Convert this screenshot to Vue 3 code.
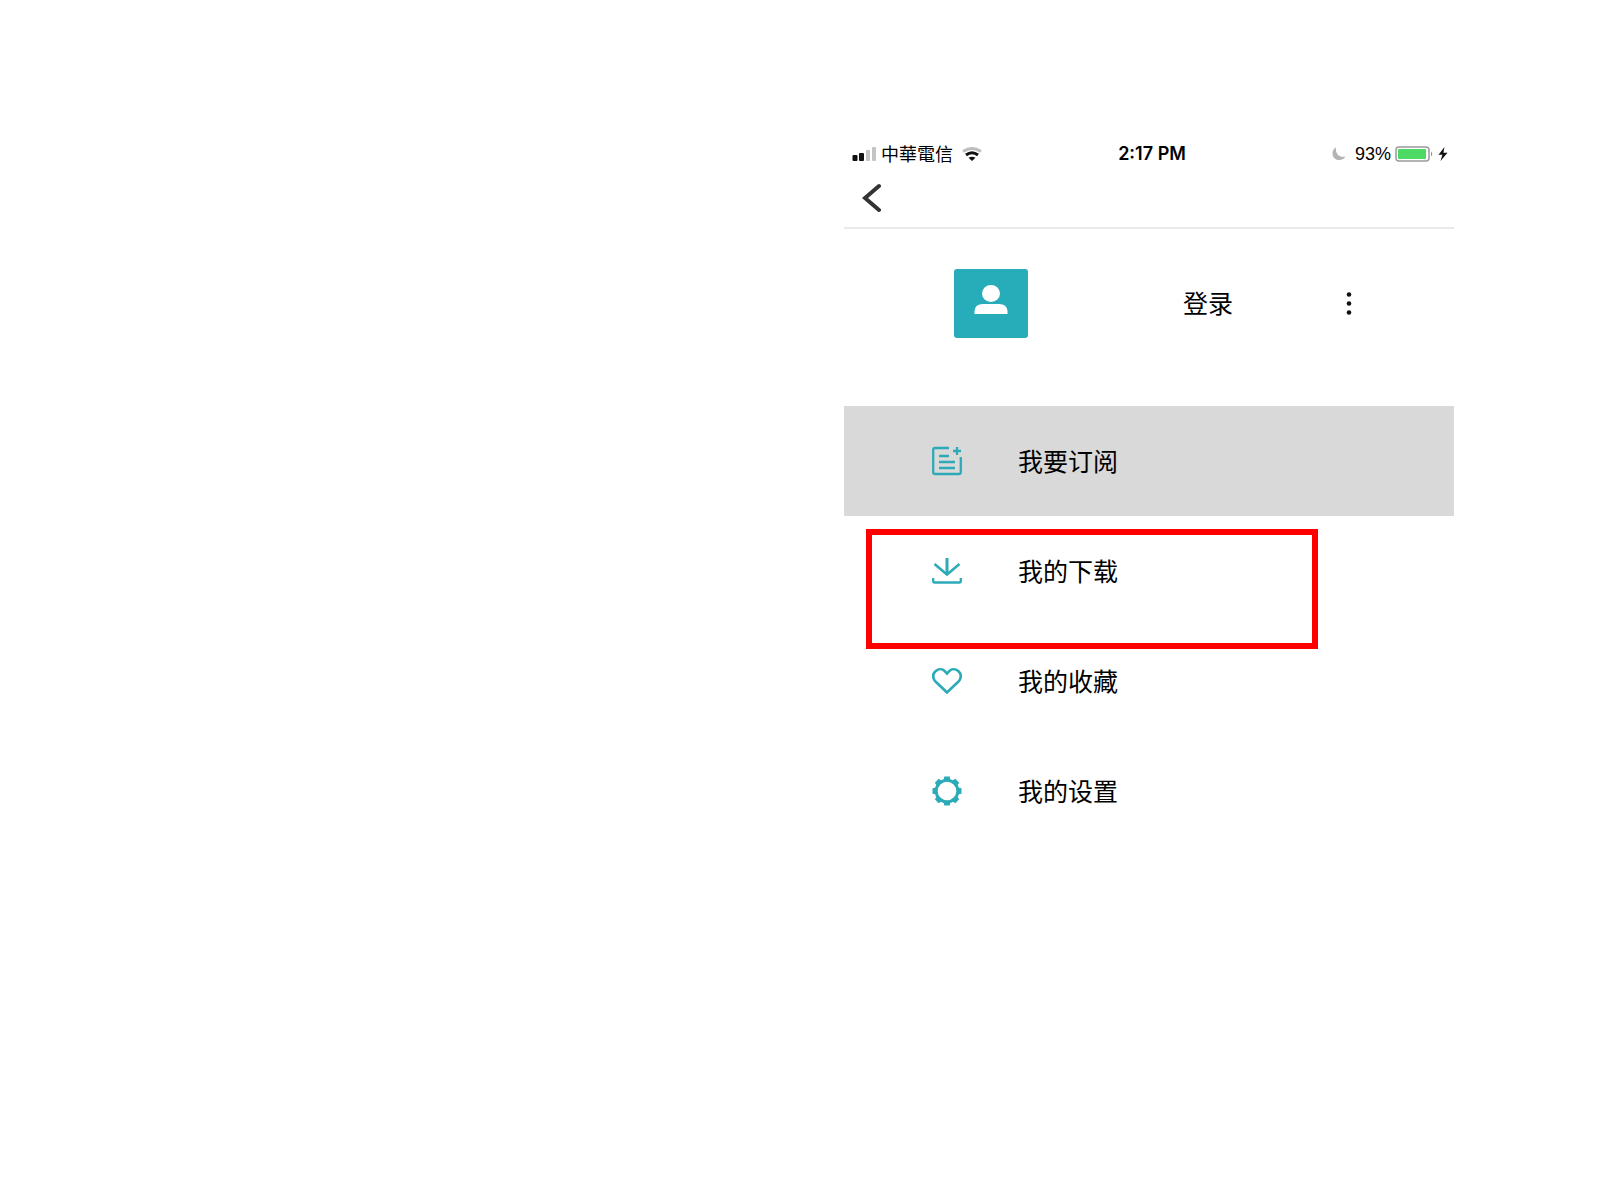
<script setup>
const items = [
  { id: 'subscribe', label: '我要订阅', active: true },
  { id: 'download', label: '我的下载', marked: true },
  { id: 'favorite', label: '我的收藏' },
  { id: 'settings', label: '我的设置' },
]
const teeth = [0, 45, 90, 135, 180, 225, 270, 315]
</script>

<template>
  <div class="page">
    <main class="phone">
      <div class="status">
        <div class="status-left">
          <svg width="25" height="14" viewBox="0 0 25 14" aria-hidden="true">
            <rect x="0.500" y="8" width="5" height="6" rx="1" fill="#111" />
            <rect x="7" y="6" width="5" height="8" rx="1" fill="#111" />
            <rect x="14" y="3" width="4" height="11" rx="1" fill="#c4c4c4" />
            <rect x="20" y="0" width="4" height="14" rx="1" fill="#c4c4c4" />
          </svg>
          <span class="carrier">中華電信</span>
          <svg class="wifi" width="20" height="14" viewBox="0 0 20 14" fill="none" aria-hidden="true">
            <path d="M1 4.500 Q10 -1.500 19 4.500" stroke="#bdbdbd" stroke-width="2.800" />
            <path d="M4 8 Q10 3.500 16 8" stroke="#111" stroke-width="3" />
            <path d="M6.500 10.800 Q10 8.500 13.500 10.800 L10 14 Z" fill="#111" />
          </svg>
        </div>
        <span class="time">2:17 PM</span>
        <div class="status-right">
          <svg width="14" height="14" viewBox="0 0 14 14" aria-hidden="true">
            <path d="M4 0.500 C1.500 1.500 0.500 4 0.500 6.500 C0.500 10.500 3.500 13 7 13 C10 13 12.500 11.500 13.500 9.500 C8.500 11 3 7.500 4 0.500 Z" fill="#b4b4b4" />
          </svg>
          <span class="percent">93%</span>
          <svg width="39" height="16" viewBox="0 0 39 16" aria-hidden="true">
            <rect x="1" y="1" width="33" height="14" rx="3" fill="#fff" stroke="#9b9b9b" stroke-width="1.500" />
            <rect x="3" y="3" width="28" height="10" rx="1" fill="#4cd964" />
            <path d="M36 5.500 Q38.500 8 36 10.500 Z" fill="#8f8f8f" />
          </svg>
          <svg width="10" height="14" viewBox="0 0 10 14" aria-hidden="true">
            <path d="M6.500 0 L0.500 7.800 H4.400 L2.500 14 L9.500 5.800 H5.400 Z" fill="#111" />
          </svg>
        </div>
      </div>

      <header class="bar">
        <button class="icon-button" type="button" aria-label="返回">
          <svg width="20" height="30" viewBox="0 0 20 30" fill="none" aria-hidden="true">
            <path d="M17 3 L3 15 L17 27" stroke="#333" stroke-width="4" stroke-linecap="round" />
          </svg>
        </button>
      </header>

      <section class="profile">
        <div class="avatar">
          <svg width="34" height="30" viewBox="0 0 34 30" fill="#fff" aria-hidden="true">
            <ellipse cx="17" cy="8.500" rx="9" ry="8.500" />
            <path d="M0.500 29 V26 Q1 19 9 19 H25 Q33 19 33.500 26 V29 Z" />
          </svg>
        </div>
        <a class="login" href="#login">登录</a>
        <button class="icon-button more" type="button" aria-label="更多">
          <svg width="8" height="24" viewBox="0 0 8 24" fill="#111" aria-hidden="true">
            <circle cx="4" cy="2.500" r="2.300" />
            <circle cx="4" cy="11.500" r="2.300" />
            <circle cx="4" cy="20.500" r="2.300" />
          </svg>
        </button>
      </section>

      <nav>
        <ul class="menu">
          <li v-for="item in items" :key="item.id" class="entry">
            <a class="row" :class="{ active: item.active }" :href="'#' + item.id">
              <svg class="glyph" width="30" height="30" viewBox="0 0 30 30" fill="none" stroke="#2caab7" stroke-width="2.300" aria-hidden="true">
                <template v-if="item.id === 'subscribe'">
                  <path d="M17 2 H3 Q1.200 2 1.200 4 V26 Q1.200 28 3 28 H27 Q28.800 28 28.800 26 V11" />
                  <path d="M25 1 V9 M21 5 H29" />
                  <path d="M7 10 H17 M7 16 H23 M7 22 H23" />
                </template>
                <template v-else-if="item.id === 'download'">
                  <path d="M15 2 V18" stroke-width="3" />
                  <path d="M2.500 8 L15 18.500 L27.500 8" stroke-width="2.500" />
                  <path d="M1.200 22 V25 Q1.200 26.500 2.500 26.500 H27.500 Q28.800 26.500 28.800 25 V22" />
                </template>
                <path
                  v-else-if="item.id === 'favorite'"
                  d="M15 26.500 L3.500 15.500 C0.500 12.500 0.500 8 3.500 5.300 C6.500 2.600 10.500 2.600 13 5.300 L15 7.500 L17 5.300 C19.500 2.600 23.500 2.600 26.500 5.300 C29.500 8 29.500 12.500 26.500 15.500 Z"
                  stroke-width="2.600"
                />
                <template v-else>
                  <circle cx="15" cy="15" r="10.800" stroke-width="3" />
                  <path
                    v-for="angle in teeth"
                    :key="angle"
                    :transform="`rotate(${angle} 15 15)`"
                    d="M11.500 4.500 L12.300 0.500 H17.700 L18.500 4.500 Z"
                    fill="#2caab7"
                    stroke="none"
                  />
                </template>
              </svg>
              <span class="label">{{ item.label }}</span>
            </a>
            <div v-if="item.marked" class="marker"></div>
          </li>
        </ul>
      </nav>
    </main>
  </div>
</template>

<style>
body {
  background: #fff;
}
</style>

<style scoped>
.page {
  display: grid;
  grid-template-columns: 422fr 305fr 73fr;
  padding: 130px 0;
  color: #000;
  font-family: "Noto Sans CJK SC", sans-serif;
}
.phone {
  grid-column: 2;
  min-width: 0;
}
.status {
  display: grid;
  grid-template-columns: 1fr auto 1fr;
  align-items: center;
  height: 48px;
  padding: 0 6px 0 8px;
  font-family: Inter, "Noto Sans CJK TC", sans-serif;
  font-size: 18px;
  line-height: 24px;
  white-space: nowrap;
}
.status-left,
.status-right {
  display: flex;
  align-items: center;
}
.carrier {
  margin-left: 4px;
  padding-bottom: 2px;
  font-family: "Noto Sans CJK TC", sans-serif;
}
.wifi {
  margin-left: 9px;
}
.time {
  padding-left: 4px;
  font-weight: 600;
}
.status-right {
  justify-content: flex-end;
}
.percent {
  margin: 0 4px 0 9px;
  font-family: "Liberation Sans", sans-serif;
}
.status-right svg:last-child {
  margin-left: 4px;
}
.bar {
  display: flex;
  height: 49px;
  padding-left: 18px;
  border-bottom: 2px solid #e9e9e9;
}
.icon-button {
  display: flex;
  padding: 0;
  border: 0;
  background: none;
  cursor: pointer;
}
.bar .icon-button {
  align-self: flex-start;
  padding-top: 5px;
}
.profile {
  display: flex;
  align-items: center;
  height: 69px;
  padding: 40px 101px 68px 110px;
}
.avatar {
  display: flex;
  justify-content: center;
  width: 74px;
  height: 53px;
  padding-top: 16px;
  border-radius: 3px;
  background: #27adba;
}
.login {
  margin-left: auto;
}
.login,
.label {
  padding-bottom: 3px;
  font-size: 25px;
  line-height: 36px;
}
.more {
  margin-left: 112px;
}
.menu {
  margin: 0;
  padding: 0;
  list-style: none;
}
.entry {
  position: relative;
}
.row {
  display: flex;
  align-items: center;
  gap: 56px;
  height: 110px;
  padding-left: 88px;
}
.row.active {
  background: #d9d9d9;
}
.login,
.row {
  color: #000;
  text-decoration: none;
}
.glyph {
  flex: none;
}
.marker {
  position: absolute;
  z-index: 1;
  top: 13px;
  right: 136px;
  left: 22px;
  box-sizing: border-box;
  height: 120px;
  border: 6px solid #f00;
  pointer-events: none;
}
</style>
